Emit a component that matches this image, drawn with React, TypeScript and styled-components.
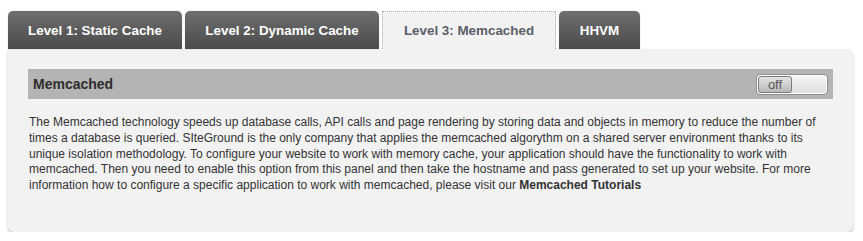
import React, { useState } from "react";
import styled, { createGlobalStyle } from "styled-components";

const Global = createGlobalStyle`
  html, body { margin: 0; padding: 0; background: #ffffff; }
  body { font-family: "Liberation Sans", Arial, sans-serif; }
`;

const Page = styled.div`
  padding: 11px 10px 0 8px;
`;

const TabBar = styled.div`
  display: flex;
  align-items: flex-end;
  gap: 3px;
  height: 38px;
`;

const Tab = styled.div<{ $active?: boolean; $w: number }>`
  box-sizing: border-box;
  width: ${(p) => p.$w}px;
  height: 38px;
  display: flex;
  align-items: center;
  justify-content: center;
  font-size: 13.4px;
  font-weight: bold;
  cursor: pointer;
  ${(p) =>
    p.$active
      ? `
    background: #f2f2f2;
    color: #5b5f68;
    border: 1px dotted #a8a8a8;
    border-bottom: none;
  `
      : `
    background: linear-gradient(#6e6e6e, #4b4b4b);
    color: #ffffff;
    border-radius: 5px 5px 0 0;
    box-shadow: 0 0 2px rgba(0,0,0,0.15);
  `}
`;

const Panel = styled.div`
  background: #f2f2f2;
  border-radius: 0 6px 6px 6px;
  box-shadow: 0 2px 3px rgba(0, 0, 0, 0.22), 0 0 1px rgba(0, 0, 0, 0.08);
  padding: 20px 20px 0 20px;
  height: 183px;
  box-sizing: border-box;
`;

const Header = styled.div`
  display: flex;
  align-items: center;
  justify-content: space-between;
  background: #b4b4b4;
  height: 30px;
  padding: 0 5px 0 5px;
`;

const Title = styled.div`
  font-size: 14px;
  font-weight: bold;
  color: #2e2e2e;
`;

const Toggle = styled.div`
  box-sizing: border-box;
  width: 72px;
  height: 21px;
  border: 1px solid #8f8f8f;
  border-radius: 4px;
  background: linear-gradient(#f6f6f6, #dedede);
  box-shadow: inset 0 0 0 1px #ffffff;
  padding: 1px;
  display: flex;
  align-items: center;
`;

const Knob = styled.div`
  box-sizing: border-box;
  width: 34px;
  height: 17px;
  border: 1px solid #7a7a7a;
  border-radius: 3px;
  background: linear-gradient(#e4e4e4, #b9b9b9);
  color: #555;
  font-size: 13px;
  display: flex;
  align-items: center;
  justify-content: center;
  line-height: 1;
`;

const Text = styled.p`
  margin: 16px 0 0 1px;
  font-size: 12px;
  line-height: 15.8px;
  color: #333333;
  padding-right: 4px;
`;

const Bold = styled.b`
  font-weight: bold;
  color: #333;
`;

const tabs = [
  { label: "Level 1: Static Cache", w: 174 },
  { label: "Level 2: Dynamic Cache", w: 194 },
  { label: "Level 3: Memcached", w: 174 },
  { label: "HHVM", w: 81 },
];

export default function App() {
  const [active, setActive] = useState(2);
  return (
    <Page>
      <Global />
      <TabBar>
        {tabs.map((t, i) => (
          <Tab key={t.label} $w={t.w} $active={i === active} onClick={() => setActive(i)}>
            {t.label}
          </Tab>
        ))}
      </TabBar>
      <Panel>
        <Header>
          <Title>Memcached</Title>
          <Toggle>
            <Knob>off</Knob>
          </Toggle>
        </Header>
        <Text>
          The Memcached technology speeds up database calls, API calls and page rendering by storing data and
          objects in memory to reduce the number of times a database is queried. SIteGround is the only company
          that applies the memcached algorythm on a shared server environment thanks to its unique isolation
          methodology. To configure your website to work with memory cache, your application should have the
          functionality to work with memcached. Then you need to enable this option from this panel and then take
          the hostname and pass generated to set up your website. For more information how to configure a specific
          application to work with memcached, please visit our <Bold>Memcached Tutorials</Bold>
        </Text>
      </Panel>
    </Page>
  );
}
